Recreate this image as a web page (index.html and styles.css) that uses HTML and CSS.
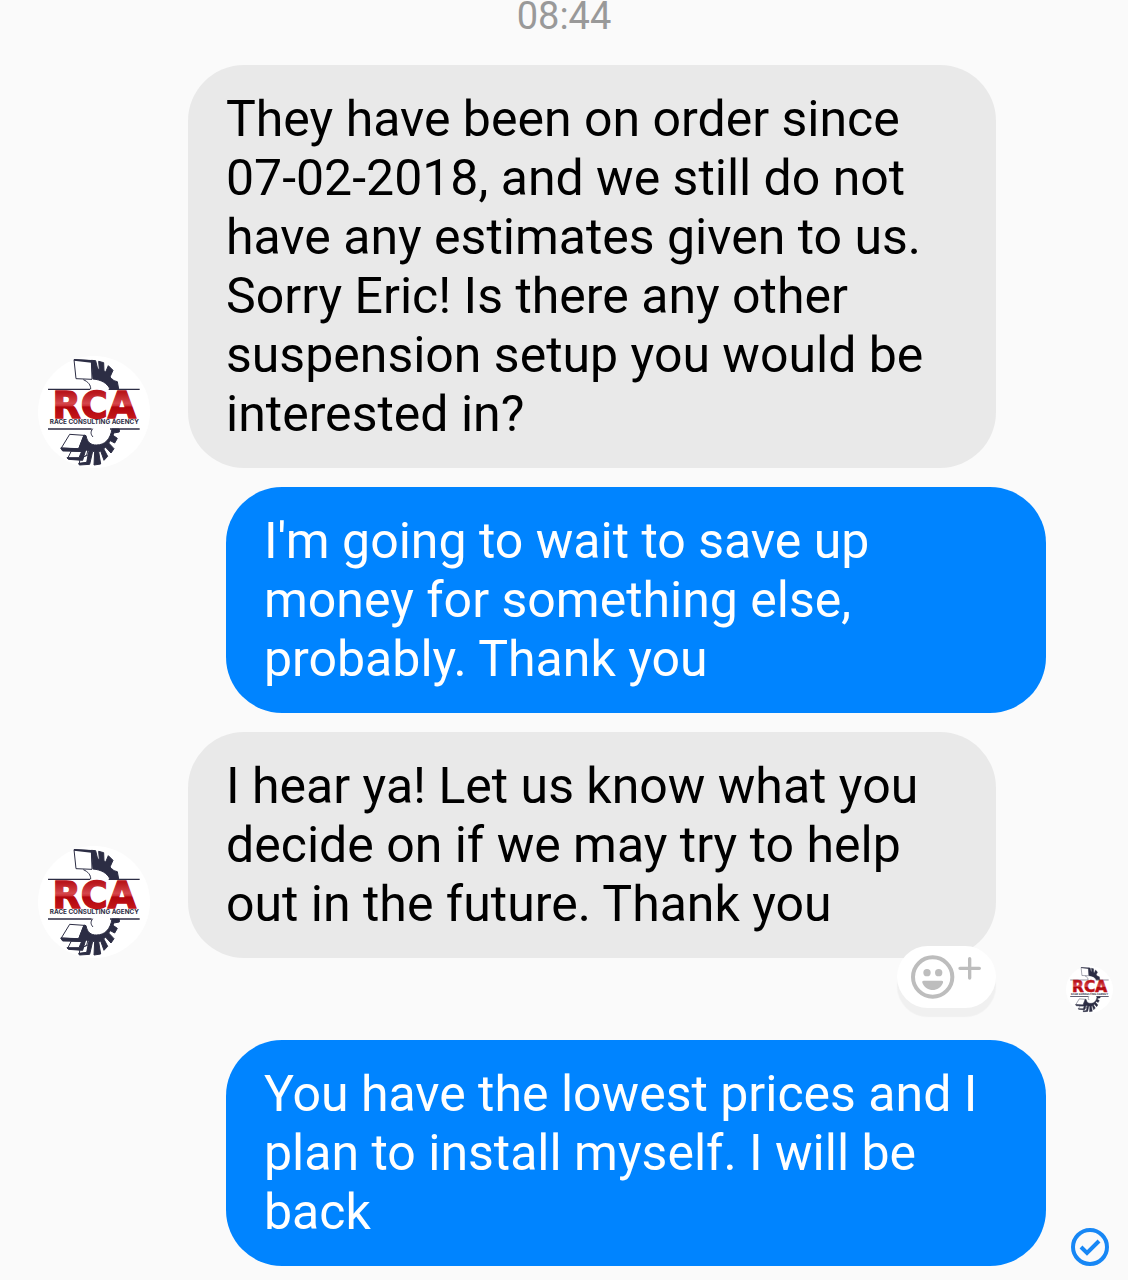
FILE: index.html
```html
<!DOCTYPE html>
<html lang="en">
<head>
<meta charset="utf-8">
<meta name="viewport" content="width=device-width, initial-scale=1">
<title>Conversation</title>
<link rel="stylesheet" href="styles.css">
</head>
<body>
<svg class="defs" aria-hidden="true">
  <defs>
    <linearGradient id="gloss" x1="0" y1="124" x2="0" y2="204" gradientUnits="userSpaceOnUse">
      <stop offset="0" stop-color="#b9161c"/>
      <stop offset="0.4" stop-color="#d5474b"/>
      <stop offset="0.48" stop-color="#cf3338"/>
      <stop offset="0.54" stop-color="#b0060c"/>
      <stop offset="1" stop-color="#c5161b"/>
    </linearGradient>
    <symbol id="rca" viewBox="12 14 336 336">
      <circle cx="180" cy="182" r="168" fill="#fff"/>
      <g fill="#fff" stroke="#2c2d44" stroke-width="3" stroke-linejoin="round">
        <path d="M120 25L172 28L174 84L126 82Z"/>
        <path d="M148 85C162 91 171 101 170 114" fill="none"/>
        <path d="M176 232C168 243 171 250 177 257" fill="none"/>
        <path d="M107 249L150 252L134 293L82 290Z"/>
        <path d="M112 299L150 301L151 285L165 283L158 312L134 325L101 321Z"/>
        <path d="M138 322L164 310L160 336L136 337Z"/>
      </g>
      <g fill="#2c2d44">
        <path d="M120 23L172 26L176 32L172 34L120 28Z"/>
        <path stroke="#2c2d44" stroke-width="3" d="M172 27L185 28L191 53L196 54L194 30L209 34L210 59L215 62L223 43L237 57L228 77L233 82L240 88L250 91L254 113L228 113C220 96 202 85 177 83Z"/>
        <path stroke="#2c2d44" stroke-width="3" d="M80 290L134 292L150 251L156 253C160 274 171 281 187 281C213 281 229 264 234 233L256 233V242L239 245L237 252L250 261L242 275L229 268L224 275L240 292L231 305L215 288L209 292L221 315L210 327L200 299L194 301L200 338L180 341L182 301L176 300L167 339L136 341L134 336L158 333L165 298L155 296L146 327L103 324L99 319L135 319L143 300L86 299Z"/>
        <path d="M42 112H168V116H42ZM224 112H317V116H224ZM42 231H173V235H42ZM228 231H317V235H228Z"/>
      </g>
      <text class="logo-name" x="181" y="201" text-anchor="middle">RCA</text>
      <text class="logo-line" x="181" y="219" text-anchor="middle">RACE CONSULTING AGENCY</text>
    </symbol>
  </defs>
</svg>

<main class="thread">
  <time class="stamp" datetime="08:44">08:44</time>

  <article class="row received">
    <svg class="avatar" role="img" aria-label="Race Consulting Agency"><use href="#rca"/></svg>
    <p class="bubble">They have been on order since 07-02-2018, and we still do not have any estimates given to us. Sorry Eric! Is there any other suspension setup you would be interested in?</p>
  </article>

  <article class="row sent">
    <p class="bubble">I'm going to wait to save up money for something else, probably. Thank you</p>
  </article>

  <article class="row received">
    <svg class="avatar" role="img" aria-label="Race Consulting Agency"><use href="#rca"/></svg>
    <p class="bubble">I hear ya! Let us know what you decide on if we may try to help out in the future. Thank you</p>
  </article>

  <div class="receipt">
    <button class="react" type="button" aria-label="Add reaction">
      <svg class="react-icon" viewBox="0 0 210 132" aria-hidden="true">
        <circle cx="65" cy="66" r="59" fill="none" stroke="#bdbdbd" stroke-width="12"/>
        <circle cx="48" cy="53" r="11" fill="#bdbdbd"/>
        <circle cx="83" cy="53" r="11" fill="#bdbdbd"/>
        <path d="M38 77H92Q98 77 96 83C84 112 46 112 34 83Q32 77 38 77Z" fill="#bdbdbd"/>
        <path d="M176 11V69M147 40H205" fill="none" stroke="#bdbdbd" stroke-width="10" stroke-linecap="round"/>
      </svg>
    </button>
    <svg class="seen" role="img" aria-label="Seen by Race Consulting Agency"><use href="#rca"/></svg>
  </div>

  <article class="row sent">
    <p class="bubble">You have the lowest prices and I plan to install myself. I will be back</p>
    <svg class="delivered" viewBox="0 0 38 38" role="img" aria-label="Sent">
      <circle cx="19" cy="19" r="17" fill="none" stroke="#1787f5" stroke-width="4"/>
      <path d="M10 19L16 25L28 13" fill="none" stroke="#1787f5" stroke-width="4"/>
    </svg>
  </article>
</main>
</body>
</html>
```
FILE: styles.css
```css
* {
  box-sizing: border-box;
}

body {
  margin: 0;
  background: #fafafa;
  color: #000;
  font-family: Roboto, "Liberation Sans", sans-serif;
}

.defs {
  position: absolute;
  width: 0;
  height: 0;
}

.thread {
  display: flex;
  flex-direction: column;
  padding: 0 15px 14px 38px;
}

.stamp {
  margin: 0 0 33px -23px;
  color: #999;
  font-size: 38px;
  line-height: 32px;
  text-align: center;
}

.row {
  display: flex;
  align-items: flex-end;
}

.row + .row {
  margin-top: 19px;
}

.received {
  gap: 38px;
  padding-right: 117px;
}

.sent {
  gap: 25px;
  padding: 0 4px 0 188px;
}

.sent .bubble:only-child {
  margin-right: 63px;
}

.bubble {
  flex: 1;
  margin: 0;
  padding: 25px 38px 24px;
  border-radius: 56px;
  background: #e9e9e9;
  font-size: 50px;
  line-height: 59px;
}

.sent .bubble {
  background: #0084ff;
  color: #fff;
}

.avatar {
  flex: none;
  width: 112px;
  height: 112px;
}

.receipt {
  display: flex;
  justify-content: flex-end;
  align-items: flex-start;
  gap: 70px;
  height: 82px;
  padding-top: 8px;
}

.react {
  display: flex;
  align-items: center;
  width: 99px;
  height: 62px;
  margin-top: -20px;
  padding: 0 14px;
  border: 0;
  border-radius: 32px;
  background: #fff;
  box-shadow: 0 9px 1px #f0f0f0;
}

.react-icon {
  width: 70px;
  height: 44px;
}

.seen {
  width: 47px;
  height: 47px;
}

.delivered {
  flex: none;
  width: 38px;
  height: 38px;
}

.logo-name {
  fill: url(#gloss);
  stroke: url(#gloss);
  stroke-width: 4px;
  font-family: "DejaVu Sans", sans-serif;
  font-size: 110px;
  font-weight: 700;
}

.logo-line {
  fill: #2c2d44;
  font-family: Inter, "DejaVu Sans", sans-serif;
  font-size: 19px;
  font-weight: 700;
}
```
